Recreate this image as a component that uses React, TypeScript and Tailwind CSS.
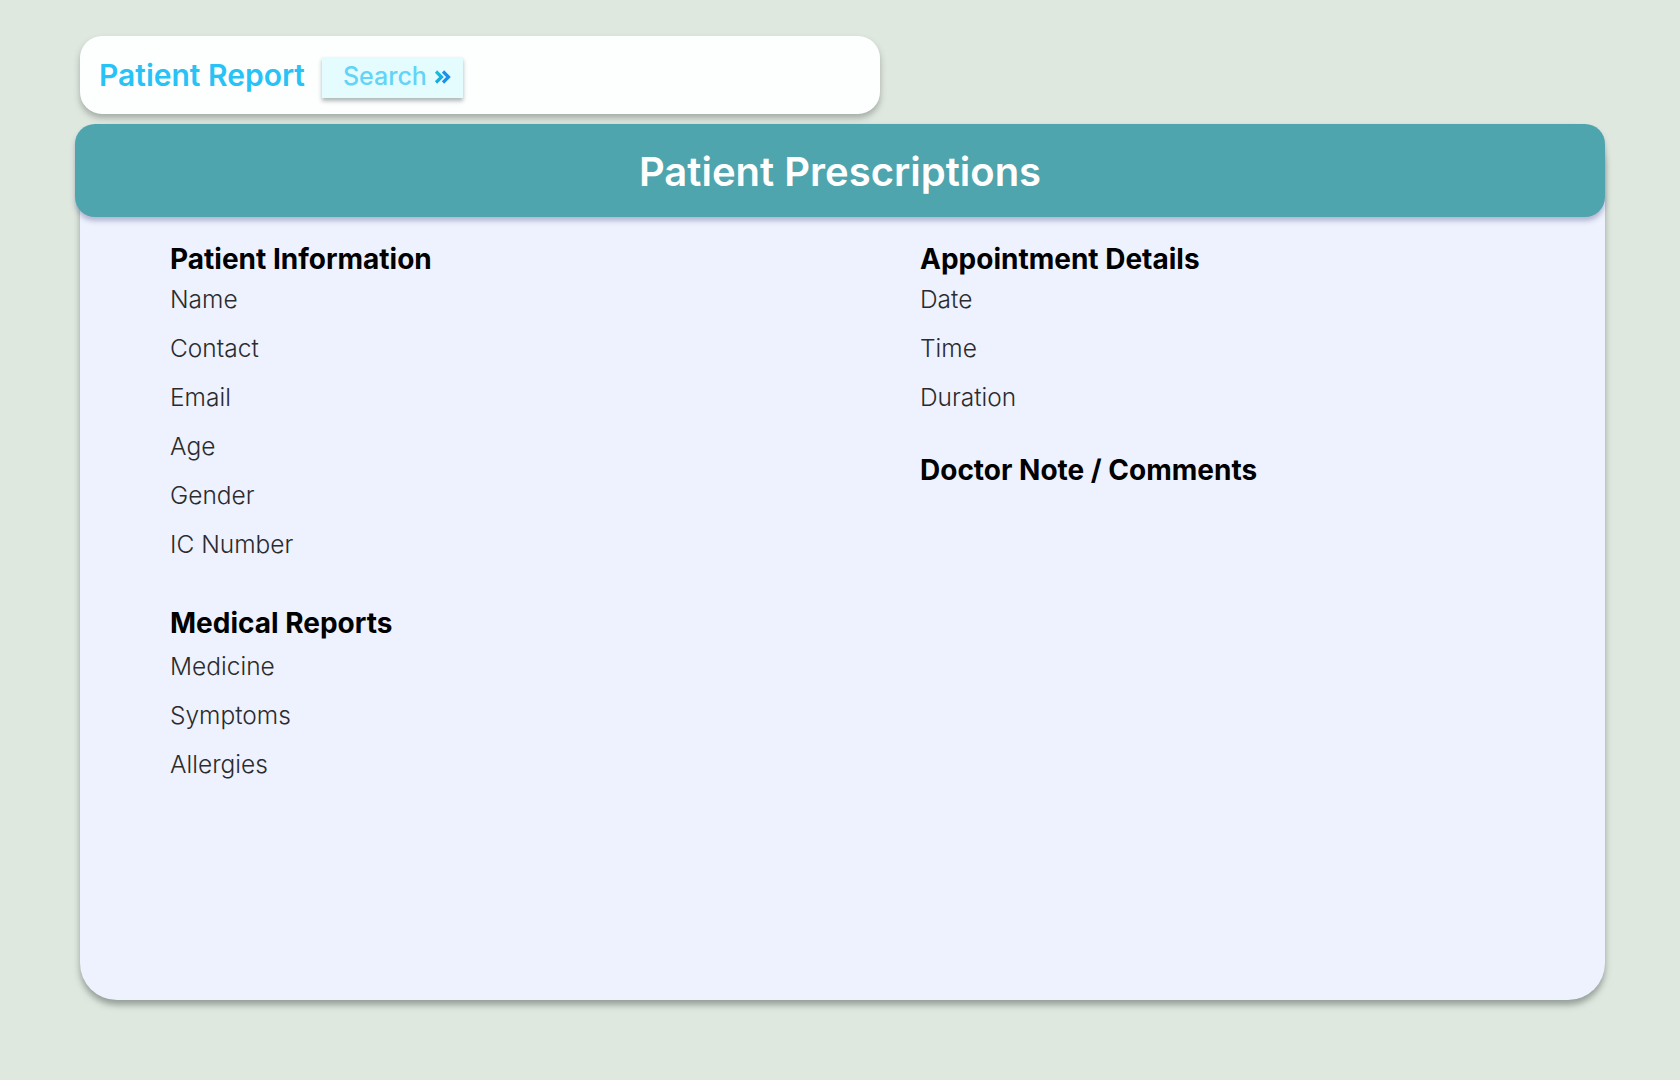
import React from "react";

const patientInfo = ["Name", "Contact", "Email", "Age", "Gender", "IC Number"];
const medical = ["Medicine", "Symptoms", "Allergies"];
const appointment = ["Date", "Time", "Duration"];

function DoubleChevron() {
  return (
    <svg width="17" height="16" viewBox="0 0 17 16" fill="none">
      <defs>
        <linearGradient id="chev" x1="0" y1="0" x2="17" y2="16" gradientUnits="userSpaceOnUse">
          <stop offset="0" stopColor="#14d0d6" />
          <stop offset="1" stopColor="#1b86ea" />
        </linearGradient>
      </defs>
      <path d="M2 2.5 L7.5 8 L2 13.5" stroke="url(#chev)" strokeWidth="3.2" strokeLinejoin="miter" />
      <path d="M9 2.5 L14.5 8 L9 13.5" stroke="#1b8fea" strokeWidth="3.2" strokeLinejoin="miter" />
    </svg>
  );
}

function Section({
  title,
  items,
  className = "",
}: {
  title: string;
  items: string[];
  className?: string;
}) {
  return (
    <div className={className}>
      <h2 className="h-[32px] text-[28px] leading-[32px] font-bold text-black">{title}</h2>
      <ul>
        {items.map((item) => (
          <li key={item} className="flex h-[49px] items-center text-[24.5px] font-light text-[#2b2b2e]">
            {item}
          </li>
        ))}
      </ul>
    </div>
  );
}

export default function App() {
  return (
    <div
      className="min-h-[1080px] w-full bg-[#dfe8df] pt-[36px] pl-[80px]"
      style={{ fontFamily: "Inter, 'Noto Sans', sans-serif" }}
    >
      <div className="flex h-[78px] w-[800px] items-center rounded-[22px] bg-[#fdffff] pl-[19px] shadow-[0_4px_6px_rgba(90,100,95,0.45)]">
        <h1 className="text-[30px] font-semibold text-[#28c3f6]">Patient Report</h1>
        <button className="mt-[4px] ml-[17px] flex h-[41px] w-[141px] items-center bg-[#e5fcff] pl-[21px] shadow-[0_3px_4px_rgba(80,90,90,0.45)]">
          <span className="text-[25px] font-medium text-[#62d4f7]">Search</span>
          <span className="ml-[7px]">
            <DoubleChevron />
          </span>
        </button>
      </div>

      <div className="mt-[10px] flex h-[876px] w-[1525px] flex-col rounded-[37px] bg-[#edf2fe] shadow-[0_5px_6px_rgba(90,100,95,0.55)]">
        <div className="-ml-[5px] flex h-[93px] w-[1530px] items-center justify-center rounded-[20px] bg-[#4fa5ae] shadow-[0_4px_5px_rgba(110,110,150,0.45)]">
          <span className="mt-[2px] text-[40px] font-semibold text-white">Patient Prescriptions</span>
        </div>
        <div className="grid grid-cols-[750px_1fr] pt-[26px] pl-[90px]">
          <div>
            <Section title="Patient Information" items={patientInfo} />
            <Section title="Medical Reports" items={medical} className="mt-[38px] [&_ul]:mt-[3px]" />
          </div>
          <div>
            <Section title="Appointment Details" items={appointment} />
            <Section title="Doctor Note / Comments" items={[]} className="mt-[32px]" />
          </div>
        </div>
      </div>
    </div>
  );
}
